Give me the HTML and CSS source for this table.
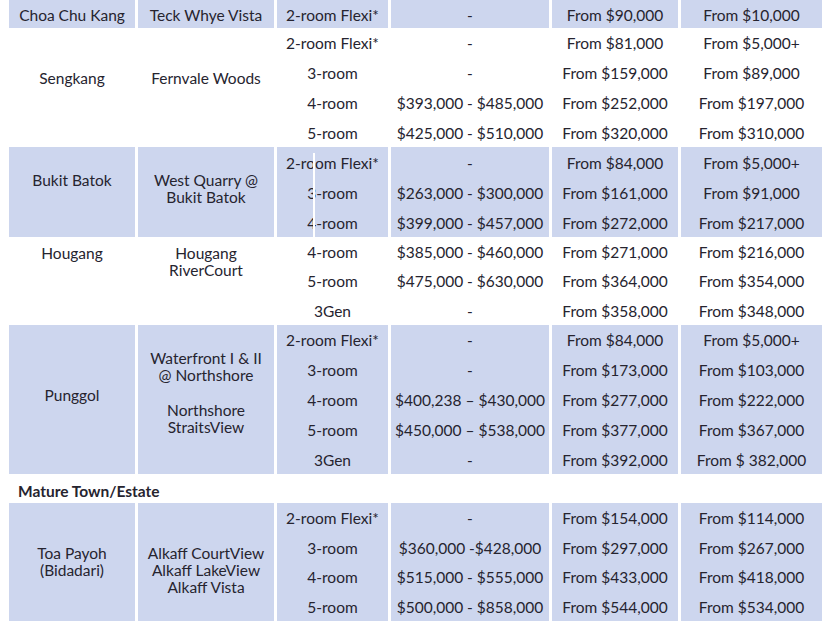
FILE: index.html
```html
<!DOCTYPE html>
<html lang="en">
<head>
<meta charset="utf-8">
<title>BTO prices</title>
<link rel="stylesheet" href="styles.css">
</head>
<body>
<div class="sheet">

  <div class="group band g-choa">
    <div class="cell name"><p>Choa Chu Kang</p></div>
    <div class="cell name"><p>Teck Whye Vista</p></div>
    <div class="cell list"><div class="line">2-room Flexi*</div></div>
    <div class="cell list"><div class="line">-</div></div>
    <div class="cell list"><div class="line">From $90,000</div></div>
    <div class="cell list"><div class="line">From $10,000</div></div>
  </div>

  <div class="group g-seng">
    <div class="cell name"><p>Sengkang</p></div>
    <div class="cell name"><p>Fernvale Woods</p></div>
    <div class="cell list">
      <div class="line">2-room Flexi*</div><div class="line">3-room</div><div class="line">4-room</div><div class="line">5-room</div>
    </div>
    <div class="cell list">
      <div class="line">-</div><div class="line">-</div><div class="line">$393,000 - $485,000</div><div class="line">$425,000 - $510,000</div>
    </div>
    <div class="cell list">
      <div class="line">From $81,000</div><div class="line">From $159,000</div><div class="line">From $252,000</div><div class="line">From $320,000</div>
    </div>
    <div class="cell list">
      <div class="line">From $5,000+</div><div class="line">From $89,000</div><div class="line">From $197,000</div><div class="line">From $310,000</div>
    </div>
  </div>

  <div class="group band g-bukit">
    <div class="cell name"><p>Bukit Batok</p></div>
    <div class="cell name"><p>West Quarry @<br>Bukit Batok</p></div>
    <div class="cell list streak">
      <div class="line">2-room Flexi*</div><div class="line">3-room</div><div class="line">4-room</div>
    </div>
    <div class="cell list">
      <div class="line">-</div><div class="line">$263,000 - $300,000</div><div class="line">$399,000 - $457,000</div>
    </div>
    <div class="cell list">
      <div class="line">From $84,000</div><div class="line">From $161,000</div><div class="line">From $272,000</div>
    </div>
    <div class="cell list">
      <div class="line">From $5,000+</div><div class="line">From $91,000</div><div class="line">From $217,000</div>
    </div>
  </div>

  <div class="group g-hou">
    <div class="cell name"><p>Hougang</p></div>
    <div class="cell name"><p>Hougang<br>RiverCourt</p></div>
    <div class="cell list">
      <div class="line">4-room</div><div class="line">5-room</div><div class="line">3Gen</div>
    </div>
    <div class="cell list">
      <div class="line">$385,000 - $460,000</div><div class="line">$475,000 - $630,000</div><div class="line">-</div>
    </div>
    <div class="cell list">
      <div class="line">From $271,000</div><div class="line">From $364,000</div><div class="line">From $358,000</div>
    </div>
    <div class="cell list">
      <div class="line">From $216,000</div><div class="line">From $354,000</div><div class="line">From $348,000</div>
    </div>
  </div>

  <div class="group band g-pung">
    <div class="cell name"><p>Punggol</p></div>
    <div class="cell name"><p>Waterfront I &amp; II<br>@ Northshore</p><p class="next">Northshore<br>StraitsView</p></div>
    <div class="cell list">
      <div class="line">2-room Flexi*</div><div class="line">3-room</div><div class="line">4-room</div><div class="line">5-room</div><div class="line">3Gen</div>
    </div>
    <div class="cell list">
      <div class="line">-</div><div class="line">-</div><div class="line">$400,238 – $430,000</div><div class="line">$450,000 – $538,000</div><div class="line">-</div>
    </div>
    <div class="cell list">
      <div class="line">From $84,000</div><div class="line">From $173,000</div><div class="line">From $277,000</div><div class="line">From $377,000</div><div class="line">From $392,000</div>
    </div>
    <div class="cell list">
      <div class="line">From $5,000+</div><div class="line">From $103,000</div><div class="line">From $222,000</div><div class="line">From $367,000</div><div class="line">From $ 382,000</div>
    </div>
  </div>

  <div class="section-title">Mature Town/Estate</div>

  <div class="group band g-toa">
    <div class="cell name"><p>Toa Payoh<br>(Bidadari)</p></div>
    <div class="cell name"><p>Alkaff CourtView<br>Alkaff LakeView<br>Alkaff Vista</p></div>
    <div class="cell list">
      <div class="line">2-room Flexi*</div><div class="line">3-room</div><div class="line">4-room</div><div class="line">5-room</div>
    </div>
    <div class="cell list">
      <div class="line">-</div><div class="line">$360,000 -$428,000</div><div class="line">$515,000 - $555,000</div><div class="line">$500,000 - $858,000</div>
    </div>
    <div class="cell list">
      <div class="line">From $154,000</div><div class="line">From $297,000</div><div class="line">From $433,000</div><div class="line">From $544,000</div>
    </div>
    <div class="cell list">
      <div class="line">From $114,000</div><div class="line">From $267,000</div><div class="line">From $418,000</div><div class="line">From $534,000</div>
    </div>
  </div>

</div>
</body>
</html>
```

FILE: styles.css
```css
html, body {
  margin: 0;
  padding: 0;
  background: #ffffff;
}

body {
  font-family: Lato, "Liberation Sans", sans-serif;
  font-size: 15.5px;
  color: #26242f;
  overflow: hidden;
}

.sheet {
  width: 822px;
  padding-left: 9px;
  box-sizing: border-box;
}

.group {
  display: grid;
  grid-template-columns: 126px 136px 111px 158px 126px 141px;
  column-gap: 3px;
}

.band .cell {
  background: #cdd6ee;
}

.cell {
  text-align: center;
  white-space: nowrap;
}

.name p {
  margin: 0;
  line-height: 17px;
}

.name p.next {
  margin-top: 18px;
}

.list {
  display: flex;
  flex-direction: column;
}

.line {
  height: 29.7px;
  padding-top: 1px;
  box-sizing: border-box;
  display: flex;
  align-items: center;
  justify-content: center;
}

/* per-group row heights and label offsets */
.g-choa .line { height: 28px; }
.g-choa .name { padding-top: 7px; }

.g-seng .line { height: 29.75px; }
.g-seng .name { padding-top: 42px; }

.g-bukit .line { height: 30px; }
.g-bukit .name { padding-top: 25px; }

.g-hou .line { height: 29.33px; }
.g-hou .name { padding-top: 8px; }

.g-pung .line { height: 29.8px; }
.g-pung .name:first-child { padding-top: 62px; }
.g-pung .name + .name { padding-top: 25px; }

.g-toa .line { height: 29.6px; }
.g-toa .name { padding-top: 42px; }

.section-title {
  height: 29px;
  line-height: 29px;
  padding-left: 9px;
  padding-top: 3px;
  box-sizing: border-box;
  font-weight: 700;
  font-size: 15.5px;
}

/* faint white scan streak in the reference */
.streak {
  position: relative;
}

.streak::before {
  content: "";
  position: absolute;
  left: 36px;
  top: 6px;
  bottom: 0;
  width: 2px;
  background: #ffffff;
}
```
